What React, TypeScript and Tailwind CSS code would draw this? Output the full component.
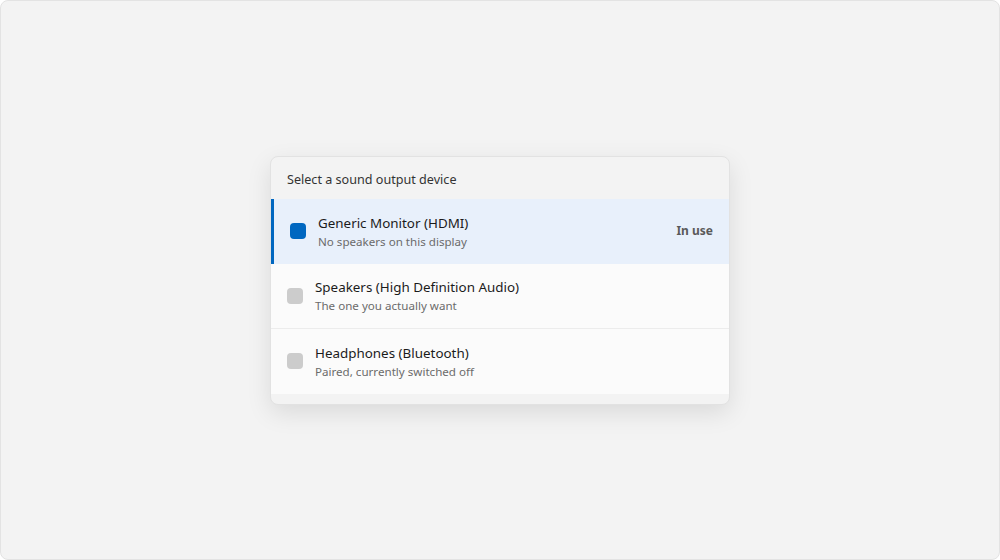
const devices = [
  { name: "Generic Monitor (HDMI)", note: "No speakers on this display", active: true },
  { name: "Speakers (High Definition Audio)", note: "The one you actually want", active: false },
  { name: "Headphones (Bluetooth)", note: "Paired, currently switched off", active: false },
];

export default function App() {
  return (
    <div
      className="w-[1000px] h-[560px] bg-[#f3f3f3] border border-[#e3e3e3] rounded-[8px] flex items-center justify-center"
      style={{ fontFamily: '"Segoe UI", "Noto Sans", sans-serif' }}
    >
      <div className="w-[460px] bg-[#f3f3f3] border border-[#e2e2e2] rounded-[8px] shadow-[0_8px_24px_rgba(0,0,0,0.10)] overflow-hidden pb-[10px]">
        <div className="h-[42px] px-[16px] pt-[5px] flex items-center text-[12.6px] text-[#333]">
          Select a sound output device
        </div>
        <div className="flex flex-col">
          {devices.map((d, i) => (
            <div
              key={d.name}
              className={
                d.active
                  ? "h-[65px] flex items-center bg-[#e8f0fb] border-l-[3px] border-[#0067c0] pl-[16px] pr-[16px]"
                  : "h-[65px] flex items-center bg-[#fbfbfb] pl-[16px] pr-[16px] " +
                    (i < devices.length - 1 ? "border-b border-[#ececec]" : "")
              }
            >
              <div
                className={
                  d.active
                    ? "w-[16px] h-[16px] rounded-[4px] bg-[#0067c0]"
                    : "w-[16px] h-[16px] rounded-[4px] bg-[#cccccc]"
                }
              />
              <div className="ml-[12px] flex flex-col flex-1 pt-[1px]">
                <span className="text-[13.4px] leading-[20px] text-[#1b1b1b]">{d.name}</span>
                <span className="text-[11.6px] leading-[18px] text-[#6b6b6b]">{d.note}</span>
              </div>
              {d.active && <span className="text-[12px] font-bold text-[#5a5a5a]">In use</span>}
            </div>
          ))}
        </div>
      </div>
    </div>
  );
}
